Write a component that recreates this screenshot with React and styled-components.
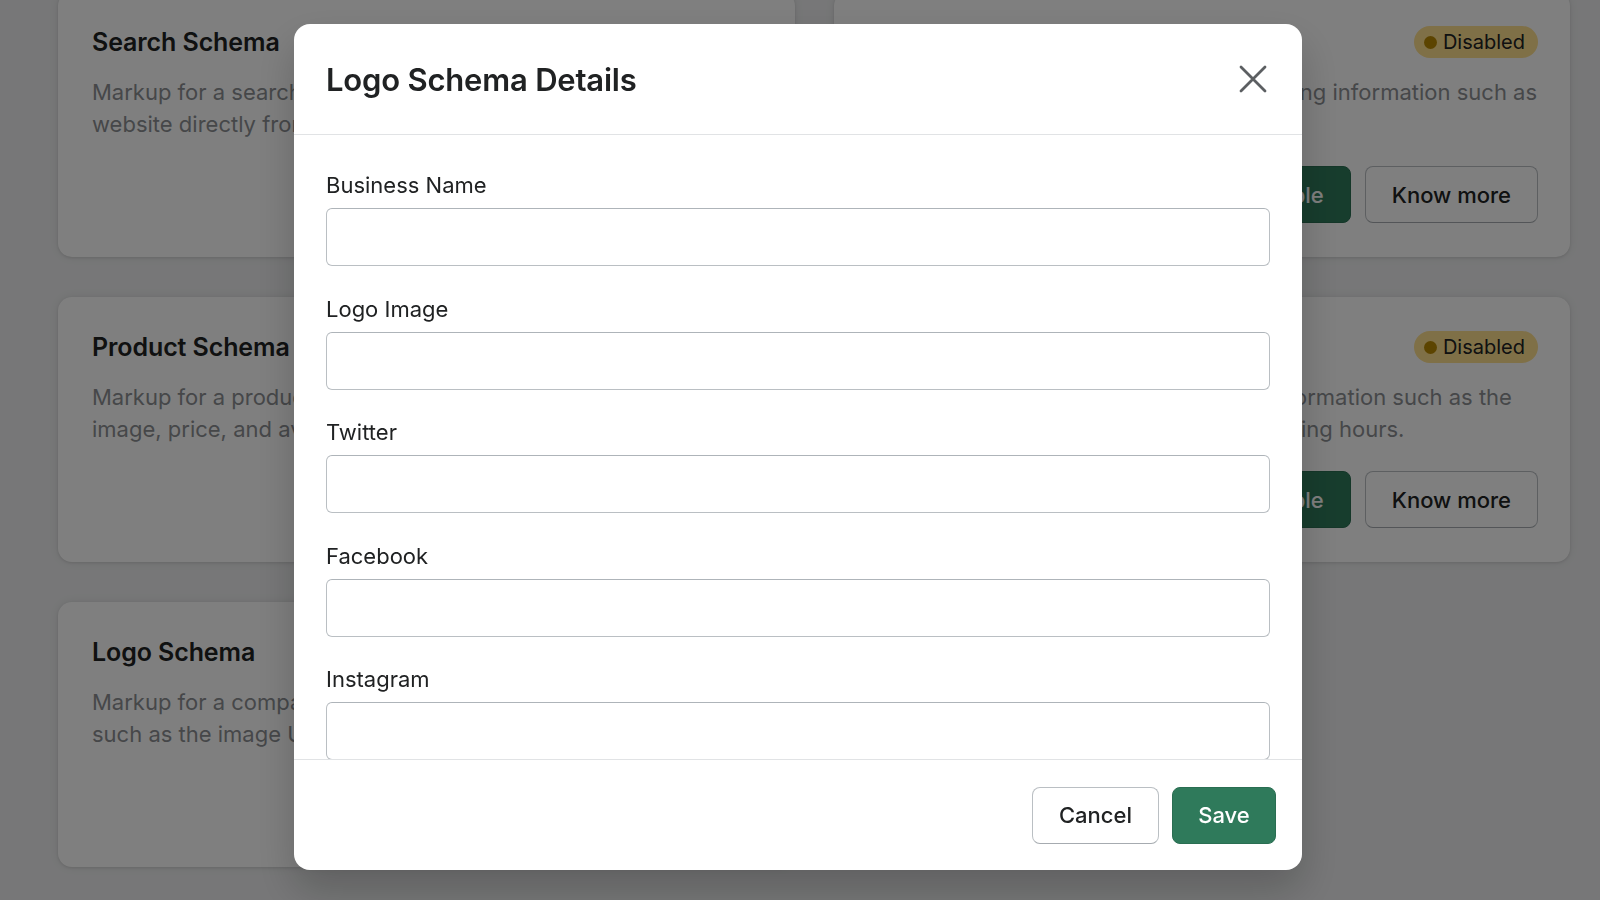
import React from "react";
import styled, { createGlobalStyle } from "styled-components";

const GlobalStyle = createGlobalStyle`
  html, body {
    margin: 0;
    padding: 0;
    background: #eeeff0;
    font-family: Inter, "Noto Sans", "Liberation Sans", sans-serif;
    color: #202223;
    overflow: hidden;
  }
  * { box-sizing: border-box; }
`;

const Page = styled.div`
  height: 900px;
  overflow: hidden;
`;

const CardGrid = styled.div`
  display: grid;
  grid-template-columns: 737px 736px;
  grid-auto-rows: 265px;
  column-gap: 39px;
  row-gap: 40px;
  padding-left: 58px;
  margin-top: -8px;
`;

const Card = styled.section`
  background: #ffffff;
  border-radius: 14px;
  box-shadow: 0 0 10px rgba(0, 0, 0, 0.08), 0 1px 3px rgba(0, 0, 0, 0.1);
  padding: 34px 32px 34px 34px;
  display: flex;
  flex-direction: column;
`;

const CardHeader = styled.div`
  display: flex;
  align-items: center;
  justify-content: space-between;
  height: 32px;
`;

const CardTitle = styled.h2`
  margin: 0;
  font-size: 25px;
  font-weight: 600;
  color: #202223;
  letter-spacing: -0.1px;
`;

const Badge = styled.span`
  display: inline-flex;
  align-items: center;
  gap: 6px;
  height: 32px;
  padding: 0 13px 0 10px;
  border-radius: 16px;
  background: #ffe08f;
  color: #202223;
  font-size: 20px;
`;

const Dot = styled.span`
  width: 13px;
  height: 13px;
  border-radius: 50%;
  background: #b98900;
`;

const CardText = styled.p`
  margin: 18px 0 0;
  font-size: 22px;
  line-height: 32px;
  color: #8c8f93;
`;

const CardActions = styled.div`
  margin-top: auto;
  display: flex;
  justify-content: flex-end;
  gap: 14px;
`;

const Button = styled.button`
  height: 57px;
  padding: 0 26px;
  border-radius: 8px;
  font-family: inherit;
  font-size: 22px;
  font-weight: 500;
  cursor: pointer;
  ${(p) =>
    p.$primary
      ? `
    background: #2f7a5b;
    color: #ffffff;
    border: 1px solid #2a6e52;
  `
      : `
    background: #ffffff;
    color: #202223;
    border: 1px solid #babfc3;
    border-bottom-color: #a6abb0;
  `}
  ${(p) => (p.$width ? `width: ${p.$width}px; padding: 0;` : "")}
`;

const Overlay = styled.div`
  position: fixed;
  inset: 0;
  background: rgba(0, 0, 0, 0.5);
  display: flex;
  justify-content: center;
  align-items: flex-start;
  padding: 24px 4px 0 0;
`;

const Modal = styled.div`
  width: 1008px;
  height: 846px;
  background: #ffffff;
  border-radius: 16px;
  display: flex;
  flex-direction: column;
  overflow: hidden;
  box-shadow: 0 20px 40px rgba(0, 0, 0, 0.2);
`;

const ModalHeader = styled.header`
  height: 111px;
  flex: none;
  display: flex;
  align-items: center;
  justify-content: space-between;
  padding: 0 35px 0 32px;
  border-bottom: 1px solid #e1e3e5;
`;

const ModalTitle = styled.h1`
  margin: 0;
  font-size: 31px;
  font-weight: 600;
  color: #202223;
  letter-spacing: -0.2px;
`;

const CloseButton = styled.button`
  width: 28px;
  height: 28px;
  padding: 0;
  border: 0;
  background: transparent;
  display: flex;
  align-items: center;
  justify-content: center;
  cursor: pointer;
`;

const ModalBody = styled.div`
  flex: 1;
  overflow-y: auto;
  scrollbar-width: none;
  padding: 35px 32px 0;
  &::-webkit-scrollbar { display: none; }
`;

const Field = styled.div`
  display: flex;
  flex-direction: column;
  margin-bottom: 27.5px;
`;

const Label = styled.label`
  font-size: 22px;
  line-height: 30px;
  color: #202223;
  margin-bottom: 8px;
`;

const Input = styled.input`
  height: 58px;
  width: 100%;
  border: 1px solid #babfc3;
  border-top-color: #aeb4b9;
  border-radius: 6px;
  padding: 0 16px;
  font-family: inherit;
  font-size: 22px;
  color: #202223;
  background: #ffffff;
  outline: none;
`;

const ModalFooter = styled.footer`
  height: 111px;
  flex: none;
  display: flex;
  align-items: center;
  justify-content: flex-end;
  gap: 13px;
  padding: 0 26px;
  border-top: 1px solid #e1e3e5;
`;

const cards = [
  {
    title: "Search Schema",
    text: "Markup for a search box that allows users to search within your website directly from the search results page.",
  },
  {
    title: "Breadcrumb Schema",
    text: "Markup for a website's navigation, including information such as the site hierarchy and breadcrumb trails.",
  },
  {
    title: "Product Schema",
    text: "Markup for a product, including key details such as the name, image, price, and availability of the item.",
  },
  {
    title: "Local Business Schema",
    text: "Markup for a local business, including information such as the address, phone number, prices, and opening hours.",
  },
  {
    title: "Logo Schema",
    text: "Markup for a company logo, including organization information such as the image URL and social profile links.",
  },
];

const fields = ["Business Name", "Logo Image", "Twitter", "Facebook", "Instagram"];

const CloseIcon = () => (
  <svg width="28" height="28" viewBox="0 0 28 28" fill="none">
    <path
      d="M2 2 L26 26 M26 2 L2 26"
      stroke="#5c5f62"
      strokeWidth="2.8"
      strokeLinecap="round"
    />
  </svg>
);

export default function App() {
  return (
    <>
      <GlobalStyle />
      <Page aria-hidden="true">
        <CardGrid>
          {cards.map((c) => (
            <Card key={c.title}>
              <CardHeader>
                <CardTitle>{c.title}</CardTitle>
                <Badge>
                  <Dot />
                  Disabled
                </Badge>
              </CardHeader>
              <CardText>{c.text}</CardText>
              <CardActions>
                <Button $primary>Enable</Button>
                <Button>Know more</Button>
              </CardActions>
            </Card>
          ))}
        </CardGrid>
      </Page>
      <Overlay>
        <Modal role="dialog" aria-label="Logo Schema Details">
          <ModalHeader>
            <ModalTitle>Logo Schema Details</ModalTitle>
            <CloseButton aria-label="Close">
              <CloseIcon />
            </CloseButton>
          </ModalHeader>
          <ModalBody>
            {fields.map((f) => (
              <Field key={f}>
                <Label>{f}</Label>
                <Input type="text" />
              </Field>
            ))}
          </ModalBody>
          <ModalFooter>
            <Button $width={127}>Cancel</Button>
            <Button $primary $width={104}>
              Save
            </Button>
          </ModalFooter>
        </Modal>
      </Overlay>
    </>
  );
}
